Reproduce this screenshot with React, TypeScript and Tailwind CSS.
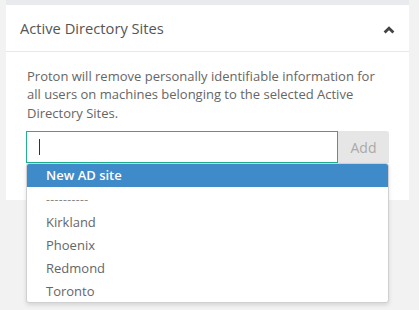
import React from "react";

const sites = ["----------", "Kirkland", "Phoenix", "Redmond", "Toronto"];

export default function App() {
    return (
        <div className="min-h-[310px] w-[419px] bg-[#f2f2f2] font-['Open_Sans',sans-serif]">
            <div className="ml-[6px] h-[5px] w-[403px] bg-[#e8eaed]" />
            <div className="ml-[6px] w-[403px] bg-white">
                <div className="flex h-[47px] items-center justify-between border-b border-[#e6e8eb] pl-[14px] pr-[14px]">
                    <h2 className="text-[14.7px] text-[#555]">Active Directory Sites</h2>
                    <svg width="12" height="8" viewBox="0 0 12 8" className="mt-[3px]">
                        <path d="M1.6 6.6 L6 2.2 L10.4 6.6" fill="none" stroke="#444" strokeWidth="2.8" />
                    </svg>
                </div>
                <div className="relative px-[20px] pb-[37px] pt-[15px]">
                    <p className="pl-[1px] text-[13px] leading-[18.3px] text-[#666]">
                        Proton will remove personally identifiable information for all users on machines belonging to the selected Active Directory Sites.
                    </p>
                    <div className="mt-[9px] flex h-[32px]">
                        <div className="flex flex-1 items-center border border-[#1fb08c] pl-[12px]">
                            <span className="h-[16px] w-[1px] bg-[#333]" />
                        </div>
                        <button className="w-[51px] rounded-tr-[3px] bg-[#e6e6e6] pt-[2px] text-[14px] text-[#aaa]">Add</button>
                    </div>
                    <div className="absolute left-[20px] top-[111px] z-10 w-[363px] overflow-hidden rounded-[3px] border border-[#d0d0d0] bg-white shadow-[0_2px_4px_rgba(0,0,0,0.12)]">
                        <div className="flex h-[23px] items-center bg-[#3f8ac9] pl-[19px] text-[13px] font-semibold text-white">New AD site</div>
                        {sites.map((s) => (
                            <div key={s} className="flex h-[23px] items-center pl-[19px] pt-[2px] text-[13px] text-[#666]">
                                {s === "----------" ? <span className="text-[12px] tracking-[0.4px] text-[#888]">{s}</span> : s}
                            </div>
                        ))}
                    </div>
                </div>
            </div>
        </div>
    );
}
